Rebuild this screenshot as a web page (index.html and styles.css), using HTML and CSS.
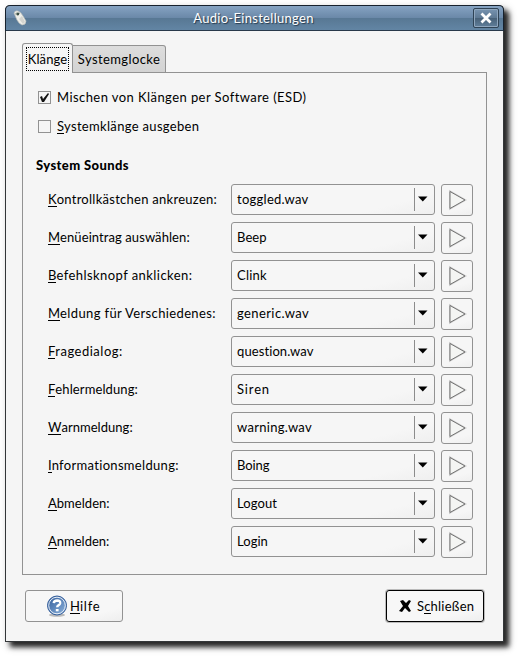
FILE: index.html
```html
<!DOCTYPE html>
<html lang="de">
<head>
<meta charset="utf-8">
<title>Audio-Einstellungen</title>
<link rel="stylesheet" href="styles.css">
</head>
<body>
<main class="window">
  <header class="titlebar">
    <svg class="app-icon" width="14" height="16" viewBox="0 0 14 16"><path d="M1 3Q2 0 5 1Q8 2 10 6L13 11Q13 15 9 15Q6 14 4 10Z" fill="#eeeee9" stroke="#b9bdb9" stroke-width=".7"/><path d="M9 6l3 6-2 2-4-5z" fill="#d4d4cf"/><path d="M2 4q2-3 5-1l-2 3z" fill="#849086"/><circle cx="5" cy="4" r="1" fill="#253a32"/></svg>
    <h1>Audio-Einstellungen</h1>
    <button class="close" aria-label="Schließen"><svg width="24" height="18" viewBox="0 0 24 18"><path d="M7.500 4.500l9 9M16.500 4.500l-9 9" stroke="#fff" stroke-width="2.8"/></svg></button>
  </header>
  <nav class="tabs"><button class="tab active"><span>Klänge</span></button><button class="tab"><span>Systemglocke</span></button></nav>
  <section class="panel">
    <label class="check"><i class="box"><svg width="11" height="11" viewBox="0 0 11 11"><path d="M1 5l2-1 1 3 5-6 1 1-5 8H3z" fill="#111"/></svg></i><span class="mix">Mischen von Klängen per Software (ESD)</span></label>
    <label class="check"><i class="box"></i><span class="output"><u>S</u>ystemklänge ausgeben</span></label>
    <h2>System Sounds</h2>
    <div class="rows" id="rows"></div>
  </section>
  <footer>
    <button class="action help"><svg width="22" height="22" viewBox="0 0 22 22"><defs><linearGradient id="blue" x2="1" y2="1"><stop stop-color="#315b98"/><stop offset="1" stop-color="#8eb5df"/></linearGradient></defs><ellipse cx="11" cy="20" rx="8" ry="1.7" fill="#bbb"/><circle cx="11" cy="10.5" r="9.5" fill="url(#blue)" stroke="#345e9b"/><circle cx="11" cy="10.5" r="8.3" fill="none" stroke="#e7eef7"/><path d="M7.7 8.2Q8 5.5 11.2 5.5Q14.4 5.6 14.2 8.2Q14 9.6 12.4 10.4Q11.2 11 11.2 12.3" fill="none" stroke="#fff" stroke-width="2.4"/><path d="M9.8 14h2.8v2.3H9.8z" fill="#fff"/></svg><span><u>H</u>ilfe</span></button>
    <button class="action dismiss"><svg width="13" height="12" viewBox="0 0 13 12"><path d="M1 1l3-1 3 3 3-3 2 1-3 5 3 5-2 1-4-4-3 4-3-1 4-5z"/></svg><span>S<u>c</u>hließen</span></button>
  </footer>
</main>
<script src="rows.js"></script>
</body>
</html>
```
FILE: rows.js
```js
// label, selected sound, and the letter spacing of each
const sounds = [
  ["Kontrollkästchen ankreuzen:", "toggled.wav", .27, .27],
  ["Menüeintrag auswählen:", "Beep", .08, .1],
  ["Befehlsknopf anklicken:", "Clink", .44, .2],
  ["Meldung für Verschiedenes:", "generic.wav", .37, .4],
  ["Fragedialog:", "question.wav", .5, .1],
  ["Fehlermeldung:", "Siren", .1, .85],
  ["Warnmeldung:", "warning.wav", .03, .3],
  ["Informationsmeldung:", "Boing", .32, -.1],
  ["Abmelden:", "Logout", .03, .1],
  ["Anmelden:", "Login", 0, .05]
];

document.getElementById("rows").innerHTML = sounds.map(([label, sound, labelSpace, soundSpace]) => `
  <div class="row">
    <span class="name" style="letter-spacing:${labelSpace}px"><u>${label[0]}</u>${label.slice(1)}</span>
    <div class="combo">
      <span style="letter-spacing:${soundSpace}px">${sound}</span>
      <svg width="20" height="23" viewBox="0 0 20 23"><path d="M.5 0v23" stroke="#8c8c8c"/><path d="M4 8.500h9.500L8.800 13.500z"/></svg>
    </div>
    <button class="play" aria-label="Abspielen"><svg width="20" height="22" viewBox="0 0 20 22"><path d="M3 2.500v17L18 11z" fill="#f4f5f3" stroke="#ccc" stroke-width="2"/><path d="M3 2.500v17L18 11z" fill="#f4f5f3" stroke="#666" stroke-width=".9"/></svg></button>
  </div>`).join("");
```
FILE: styles.css
```css
* { box-sizing: border-box; }
body { margin: 0; padding: 5px; width: 519px; height: 657px; overflow: hidden; background: #fff; color: #000; font: 13px/16px Lato, "Liberation Sans", sans-serif; }
button { margin: 0; padding: 0; color: inherit; font: inherit; }
svg { display: block; flex: none; }
span, h1, h2 { white-space: pre; }
u { text-decoration: none; box-shadow: 0 1px 0 -0px #000; display: inline-block; height: 15px; line-height: 16px; letter-spacing: 0; }
.window { width: 499px; height: 637px; background: #f5f5f5; border: 1px solid #333638; border-top: 0; border-radius: 5px 5px 0 0; box-shadow: 5px 5px 5px rgba(0,0,0,.8), 4px 4px 10px rgba(0,0,0,.3); }
.titlebar { display: flex; align-items: center; height: 26px; margin: 0 -1px; border: 1px solid #17212c; border-bottom-color: #28394a; border-radius: 5px 5px 0 0; background: linear-gradient(#86a3c2, #6b89a9 48%, #587894 52%, #6285a4); }
.app-icon { margin-left: 7px; }
h1 { flex: 1; margin: 0 0 0 7px; text-align: center; color: #fff; font-size: 13px; font-weight: 400; letter-spacing: .3px; text-shadow: 1px 1px 1px #26394c; }
.close { width: 26px; height: 20px; margin-right: 4px; border: 1px solid #2f4355; border-radius: 2px; background: linear-gradient(#7894b1, #5d7892 50%, #486178 52%, #607f9b); box-shadow: inset 0 0 0 1px #8fa6bd; }
.tabs { display: flex; align-items: flex-end; height: 30px; margin: 12px 0 -1px 16px; position: relative; }
.tab { width: 93px; height: 28px; border: 1px solid #929292; border-left: 0; border-radius: 0 3px 0 0; background: linear-gradient(#dddddd, #d3d3d3); letter-spacing: .4px; }
.tab.active { width: 51px; height: 30px; padding: 3px; border-left: 1px solid #929292; border-right: 1px solid #929292; border-bottom: 0; border-radius: 3px 3px 0 0; background: #f5f5f5; letter-spacing: .1px; }
.active span { display: block; height: 24px; border: 1px dotted #000; line-height: 22px; }
.panel { width: 465px; height: 503px; margin-left: 16px; padding: 15px 13px 0; border: 1px solid #929292; }
.check { display: flex; align-items: center; gap: 6px; height: 20px; margin-bottom: 9px; padding-left: 2px; }
.check span { margin-top: -2px; }
.box { display: block; width: 13px; height: 13px; border: 1px solid #929292; margin-top: -1px; }
.mix { letter-spacing: .43px; }
.output { letter-spacing: .32px; }
h2 { margin: 20px 0 11px; font-size: 13px; line-height: 16px; font-weight: 900; letter-spacing: .4px; }
.rows { display: grid; row-gap: 6px; padding-left: 12px; }
.row { display: grid; grid-template-columns: 183px 204px 38px; height: 32px; }
.name { padding-top: 7px; }
.combo, .play { border: 1px solid #929292; border-radius: 3px; background: linear-gradient(165deg, #f6f6f6 75%, #efefef); }
.combo { display: flex; align-items: center; justify-content: space-between; height: 31px; padding-left: 5px; }
.combo span { margin-top: -2px; }
.play { display: grid; place-items: center; width: 32px; height: 32px; margin-left: 6px; }
footer { display: flex; justify-content: space-between; margin: 15px 19px 0; }
.action { display: flex; align-items: center; width: 98px; height: 32px; border: 1px solid #929292; border-radius: 3px; background: linear-gradient(165deg, #f7f7f7 75%, #eee); }
.help { gap: 2px; padding-left: 20px; letter-spacing: .8px; }
.action span { margin-top: -1px; }
.dismiss { gap: 5px; padding-left: 12px; border-color: #000; box-shadow: 0 0 0 1px #bbb; letter-spacing: .25px; }
```
